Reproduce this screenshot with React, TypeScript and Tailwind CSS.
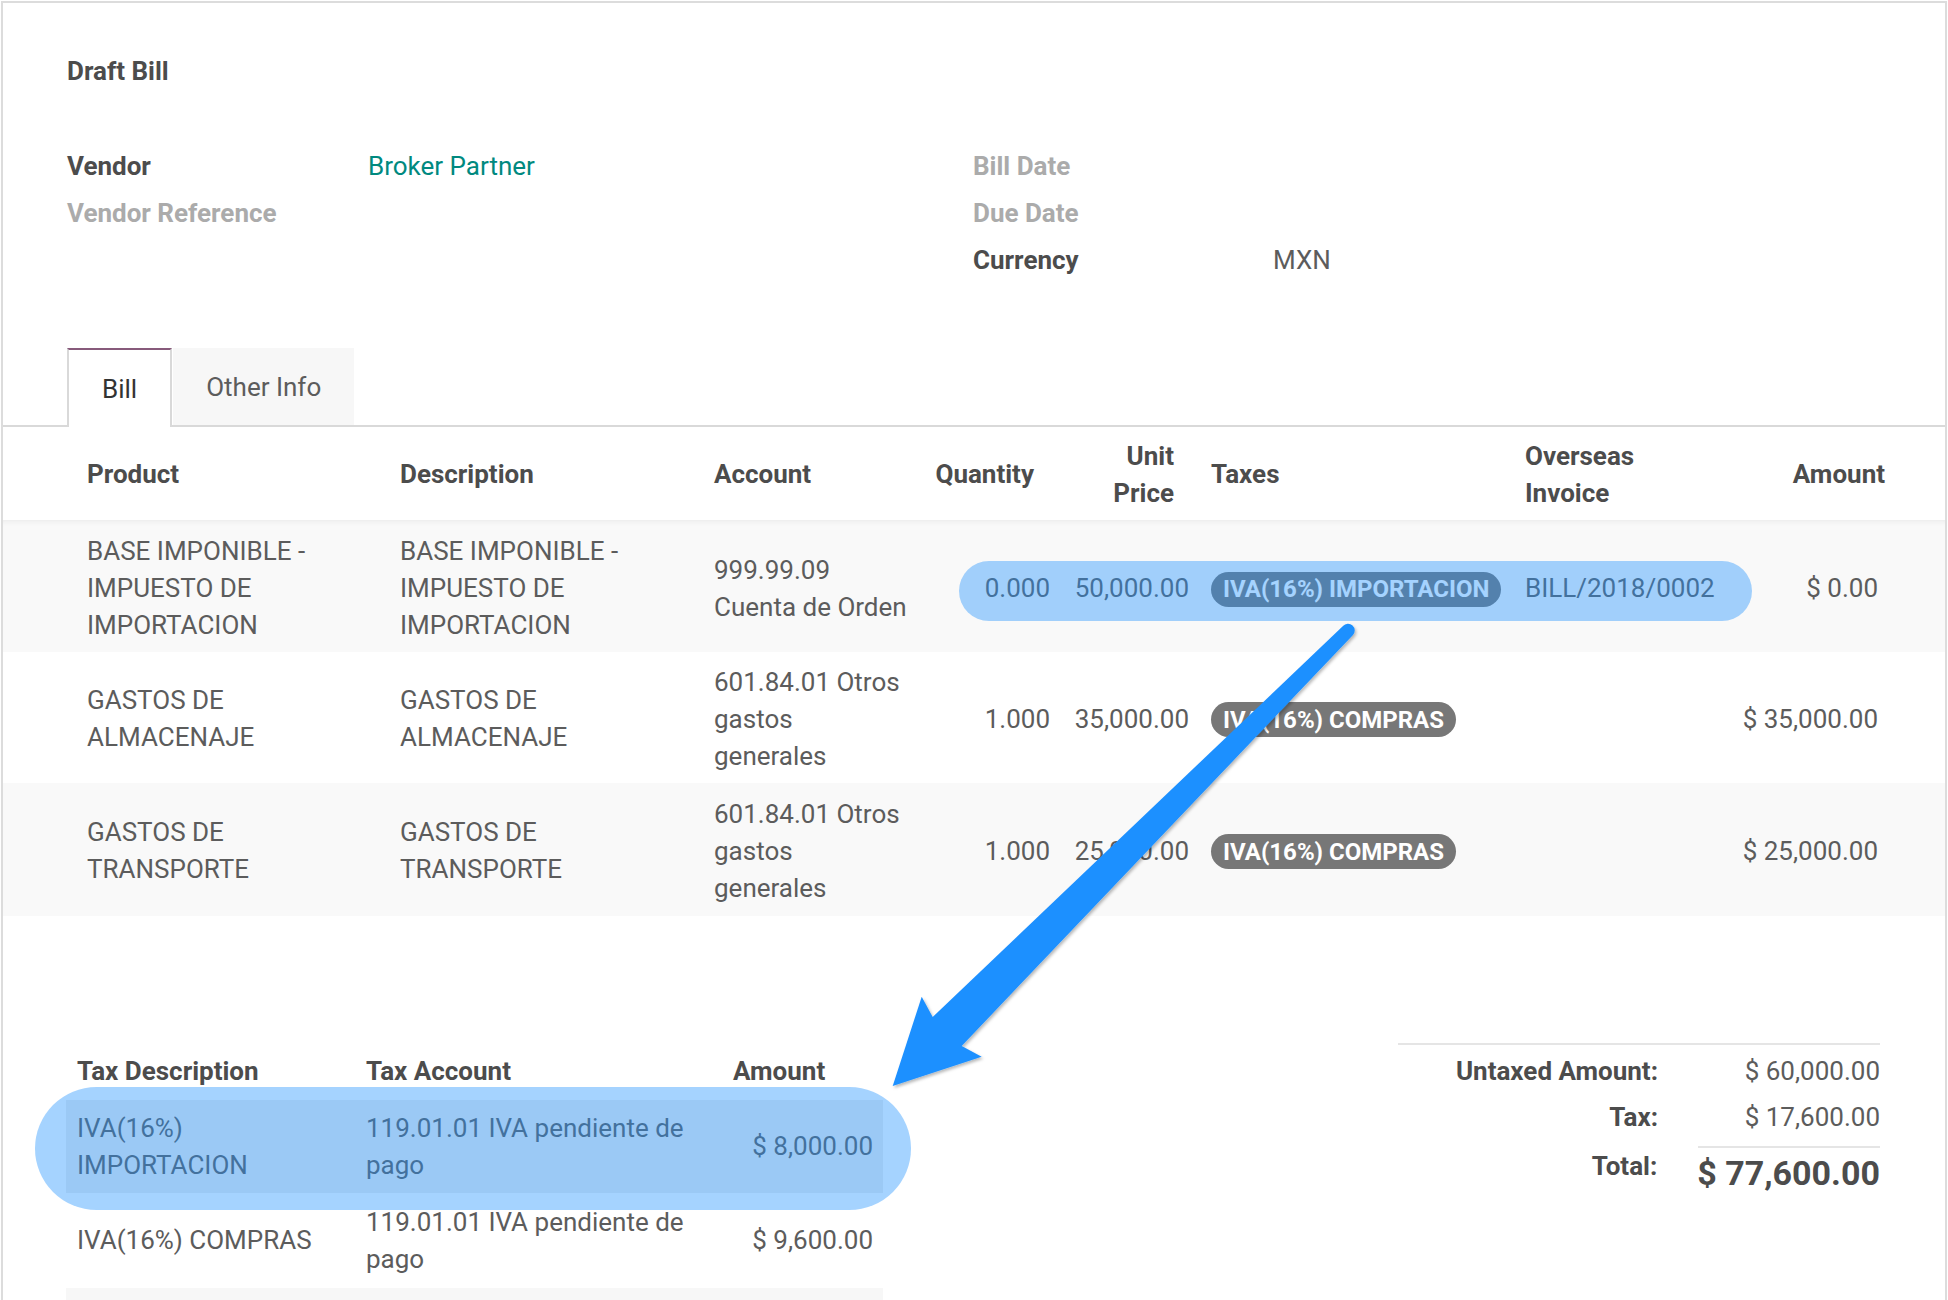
import React from "react";

type Line = {
  bg: string;
  h: string;
  product: string[];
  account: string[];
  qty: string;
  price: string;
  tax: string;
  overseas: string;
  amount: string;
};

const lines: Line[] = [
  {
    bg: "bg-[#f9f9f9] shadow-[inset_0_7px_6px_-6px_rgba(0,0,0,0.07)] pt-[5px]",
    h: "h-[132px]",
    product: ["BASE IMPONIBLE -", "IMPUESTO DE", "IMPORTACION"],
    account: ["999.99.09", "Cuenta de Orden"],
    qty: "0.000",
    price: "50,000.00",
    tax: "IVA(16%) IMPORTACION",
    overseas: "BILL/2018/0002",
    amount: "$ 0.00",
  },
  {
    bg: "bg-white pt-[3px]",
    h: "h-[131px]",
    product: ["GASTOS DE", "ALMACENAJE"],
    account: ["601.84.01 Otros", "gastos", "generales"],
    qty: "1.000",
    price: "35,000.00",
    tax: "IVA(16%) COMPRAS",
    overseas: "",
    amount: "$ 35,000.00",
  },
  {
    bg: "bg-[#f9f9f9] pt-[3px]",
    h: "h-[133px]",
    product: ["GASTOS DE", "TRANSPORTE"],
    account: ["601.84.01 Otros", "gastos", "generales"],
    qty: "1.000",
    price: "25,000.00",
    tax: "IVA(16%) COMPRAS",
    overseas: "",
    amount: "$ 25,000.00",
  },
];

function Stack({ items }: { items: string[] }) {
  return (
    <div className="flex flex-col">
      {items.map((t, i) => (
        <span key={i} className="whitespace-nowrap">
          {t}
        </span>
      ))}
    </div>
  );
}

function Tag({ label }: { label: string }) {
  return (
    <span className="inline-flex h-[35px] items-center whitespace-nowrap rounded-full bg-[#777777] px-[12px] text-[24px] font-bold leading-none text-white">
      {label}
    </span>
  );
}

export default function App() {
  return (
    <div className="relative h-[1300px] w-[1948px] overflow-hidden bg-white font-[Roboto,sans-serif] text-[26px] leading-[37px] text-[#5c5c5c]">
      {/* card */}
      <div className="ml-[1px] mt-[1px] h-[1299px] w-[1946px] border-2 border-b-0 border-[#dcdcdc]">
        {/* sheet header */}
        <div className="pl-[64px] pr-[64px] pt-[50px]">
          <div className="h-[37px] font-bold text-[#4c4c4c]">Draft Bill</div>

          <div className="mt-[53px] flex">
            <div className="w-[906px]">
              <div className="flex h-[47px] items-center">
                <span className="w-[301px] font-bold text-[#4c4c4c]">Vendor</span>
                <span className="text-[#00897f]">Broker Partner</span>
              </div>
              <div className="flex h-[47px] items-center">
                <span className="w-[301px] font-bold text-[#ababab]">Vendor Reference</span>
              </div>
            </div>
            <div>
              <div className="flex h-[47px] items-center">
                <span className="w-[300px] font-bold text-[#ababab]">Bill Date</span>
              </div>
              <div className="flex h-[47px] items-center">
                <span className="w-[300px] font-bold text-[#ababab]">Due Date</span>
              </div>
              <div className="flex h-[47px] items-center">
                <span className="w-[300px] font-bold text-[#4c4c4c]">Currency</span>
                <span className="text-[#5c5c5c]">MXN</span>
              </div>
            </div>
          </div>
        </div>

        {/* tabs */}
        <div className="mt-[64px] flex h-[79px] items-start border-b-2 border-[#d9d9d9]">
          <div className="ml-[64px] flex items-start">
            <div className="relative z-10 flex h-[79px] items-center border-2 border-b-0 border-[#d9d9d9] border-t-[#875a7b] bg-white px-[33px] pt-[2px] text-[#333333]">
              Bill
            </div>
            <div className="ml-[1px] flex h-[77px] items-center bg-[#f7f7f7] px-[33px] pt-[2px] text-[#5c5c5c]">
              Other Info
            </div>
          </div>
        </div>

        {/* lines table header */}
        <div className="flex h-[93px] items-center pl-[84px] pt-[2px] font-bold text-[#4c4c4c]">
          <div className="w-[313px]">Product</div>
          <div className="w-[314px]">Description</div>
          <div className="w-[216px]">Account</div>
          <div className="w-[120px] pr-[16px] text-right">Quantity</div>
          <div className="w-[139px] pr-[15px] text-right">
            <div>Unit</div>
            <div>Price</div>
          </div>
          <div className="ml-[22px] w-[314px]">Taxes</div>
          <div className="w-[200px]">
            <div>Overseas</div>
            <div>Invoice</div>
          </div>
          <div className="w-[160px] text-right">Amount</div>
        </div>

        {/* lines */}
        {lines.map((l, i) => (
          <div key={i} className={`flex items-center pl-[84px] ${l.bg} ${l.h}`}>
            <div className="w-[313px]">
              <Stack items={l.product} />
            </div>
            <div className="w-[314px]">
              <Stack items={l.product} />
            </div>
            <div className="w-[216px]">
              <Stack items={l.account} />
            </div>
            <div className="w-[120px] text-right">{l.qty}</div>
            <div className="w-[139px] text-right">{l.price}</div>
            <div className="ml-[22px] w-[314px]">
              <Tag label={l.tax} />
            </div>
            <div className="w-[200px] whitespace-nowrap">{l.overseas}</div>
            <div className="w-[153px] whitespace-nowrap text-right">{l.amount}</div>
          </div>
        ))}

        {/* bottom section */}
        <div className="mt-[127px] flex justify-between">
          {/* tax table */}
          <div className="ml-[63px] mt-[10px] w-[817px]">
            <div className="flex h-[47px] items-start pl-[11px] font-bold text-[#4c4c4c]">
              <div className="w-[289px]">Tax Description</div>
              <div className="w-[367px]">Tax Account</div>
              <div className="w-[91px]">Amount</div>
            </div>
            <div className="flex h-[93px] items-center bg-[#efefef] pl-[11px] pr-[10px]">
              <div className="w-[289px]">
                <Stack items={["IVA(16%)", "IMPORTACION"]} />
              </div>
              <div className="w-[300px]">
                <Stack items={["119.01.01 IVA pendiente de", "pago"]} />
              </div>
              <div className="flex-1 whitespace-nowrap text-right">$ 8,000.00</div>
            </div>
            <div className="flex h-[95px] items-center bg-white pl-[11px] pr-[10px]">
              <div className="w-[289px] whitespace-nowrap">IVA(16%) COMPRAS</div>
              <div className="w-[300px]">
                <Stack items={["119.01.01 IVA pendiente de", "pago"]} />
              </div>
              <div className="flex-1 whitespace-nowrap text-right">$ 9,600.00</div>
            </div>
            <div className="h-[40px] bg-[#f7f7f7]" />
          </div>

          {/* totals */}
          <div className="mr-[65px] w-[482px] border-t-2 border-[#e5e5e5] pt-[8px]">
            <div className="flex">
              <div className="w-[260px] text-right font-bold text-[#4c4c4c]">Untaxed Amount:</div>
              <div className="ml-[40px] flex-1 text-right">$ 60,000.00</div>
            </div>
            <div className="mt-[9px] flex">
              <div className="w-[260px] text-right font-bold text-[#4c4c4c]">Tax:</div>
              <div className="ml-[40px] flex-1 text-right">$ 17,600.00</div>
            </div>
            <div className="mt-[10px] flex">
              <div className="w-[260px]" />
              <div className="ml-[40px] h-[2px] flex-1 bg-[#e5e5e5]" />
            </div>
            <div className="flex items-start">
              <div className="w-[260px] text-right font-bold text-[#4c4c4c]">Total:</div>
              <div className="ml-[40px] mt-[1px] flex-1 whitespace-nowrap text-right text-[34px] font-bold leading-[48px] text-[#4c4c4c]">
                $ 77,600.00
              </div>
            </div>
          </div>
        </div>
      </div>

      {/* highlight overlays */}
      <div className="pointer-events-none absolute left-[959px] top-[561px] h-[60px] w-[793px] rounded-full bg-[rgba(30,144,255,0.4)]" />
      <div className="pointer-events-none absolute left-[35px] top-[1087px] h-[123px] w-[876px] rounded-[62px] bg-[rgba(30,144,255,0.4)]" />

      {/* arrow annotation */}
      <svg
        className="pointer-events-none absolute left-0 top-0"
        width="1948"
        height="1300"
        viewBox="0 0 1948 1300"
      >
        <defs>
          <filter id="ash" x="-10%" y="-10%" width="120%" height="120%">
            <feDropShadow dx="1.5" dy="2" stdDeviation="1.5" floodColor="#000" floodOpacity="0.28" />
          </filter>
        </defs>
        <path
          d="M1343 626 A6.7 6.7 0 0 1 1353 635 L961.7 1046 L981.7 1056.7 L892.7 1086 L921.7 996.7 L932.7 1017 Z"
          fill="#1e90ff"
          filter="url(#ash)"
        />
      </svg>
    </div>
  );
}
